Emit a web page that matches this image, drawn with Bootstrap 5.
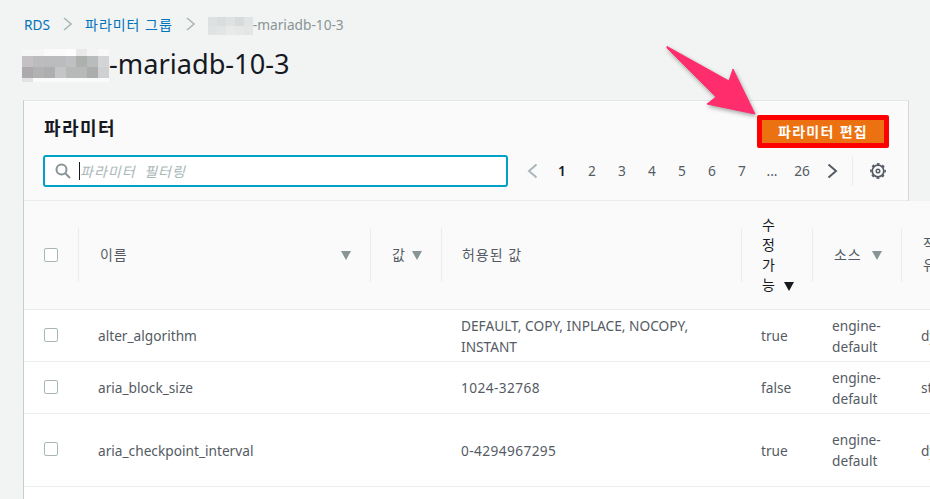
<!doctype html>
<html lang="ko">
<head>
<meta charset="utf-8">
<title>파라미터</title>
<link href="https://cdn.jsdelivr.net/npm/bootstrap@5.3.0/dist/css/bootstrap.min.css" rel="stylesheet">
<style>
html,body{height:499px;overflow:hidden}
body{background:#f2f3f3;color:#16191f;font-family:"Noto Sans","Noto Sans CJK KR",sans-serif;font-size:13.7px;line-height:21px;width:930px}
.ko{font-size:14px;letter-spacing:.07em}
.page-wrap{padding:14px 0 0 24px;position:relative}
.crumbs{height:20px;color:#879596}
.crumbs a{color:#0073bb;text-decoration:none}
.crumb-sep{width:9px;height:14px;margin:0 13px}
.crumb-mosaic{margin:3px 0 -1px}
.title-line{margin:15px 0 0 -2px;height:33px;font-size:27.2px;color:#16191f}
.title-text{line-height:29px}
.panel{margin:18px 0 0 -1px;width:886px;background:#fff;border-left:1px solid #c6cbcb;border-right:1px solid #d5dbdb;border-top:1px solid #e3e7e7}
.panel-head{background:#fafafa;padding:13px 19px 14px 19px;height:100px;border-bottom:1px solid #eaeded}
.panel-title{font-size:18px;letter-spacing:.08em;font-weight:700;line-height:28px;padding:0 0 6px 1px}
.edit-btn{background:#ec7211;border:5px solid #ff0000;border-radius:2px;color:#fff;font-weight:700;font-size:14px;letter-spacing:1.3px;line-height:23px;width:132px;height:33px;padding:0;text-align:center;white-space:nowrap}
.second-row{margin-top:7px}
.search-box{width:465px;height:32px;background:#fff;border:2px solid #00a1c9;border-radius:3px;padding-left:10px}
.search-caret{width:1px;height:18px;background:#16191f;margin:0 0 0 8px}
.search-input{border:0;outline:0;padding:0;flex:1;background:transparent;font-style:italic;font-size:14px;font-family:inherit;letter-spacing:1px;word-spacing:4px}
.search-input::placeholder{color:#aab7b8;opacity:1}
.pager{margin-left:9px;color:#545b64}
.pg{width:30px;text-align:center}
.pg-num{padding-bottom:2px}
.pg-now{color:#16191f;font-weight:600}
.pg-divider{width:1px;height:30px;background:#eaeded;margin:0 17px 0 5px}
.param-table{table-layout:fixed;width:977px;margin:0;color:#545b64;--bs-table-bg:transparent;border-collapse:separate;border-spacing:0}
.param-table>thead>tr>th{background:#fafafa;font-weight:400;height:109px;padding:0;border-bottom:1px solid #eaeded;vertical-align:middle;color:#545b64}
.param-table>tbody>tr>td{background:#fff;padding:0 20px;border-bottom:1px solid #eaeded;vertical-align:middle;color:#545b64;line-height:21px}
.param-table td.check-cell{padding:0 0 2px 20px}
.param-table td.clip-cell{padding-right:0;white-space:nowrap;overflow:hidden}
.digits{letter-spacing:.4px}
.r52{height:52px}
.r73{height:73px}
.r12{height:12px}
.hcell{height:54px;border-left:1px solid #eaeded;padding:0 19px 0 21px}
.hcell-first{border-left:0;padding:0 0 0 20px}
.hcell-tight{padding-left:20px}
.hlabel{margin-bottom:2px}
.stack{line-height:20px;color:#16191f;white-space:nowrap;flex:none;margin-left:-1px}
.stack svg{margin-left:8px}
.tri{width:10px;height:9px;flex:none}
.tick{width:14px;height:14px;border:1px solid #aab7b8;border-radius:2px;margin:0;display:block;background:#fff;appearance:none}
.blocky{display:block;flex:none}
.mark-arrow{position:absolute;left:660px;top:40px;filter:drop-shadow(1px 2px 2px rgba(0,0,0,.35))}
</style>
</head>
<body>
<div class="page-wrap">
  <nav class="crumbs d-flex align-items-center">
    <a href="#">RDS</a>
    <svg class="crumb-sep" viewBox="0 0 9 14"><path d="M1 1l7 6-7 6" fill="none" stroke="#aab7b8" stroke-width="1.6"/></svg>
    <a href="#" class="ko">파라미터 그룹</a>
    <svg class="crumb-sep" viewBox="0 0 9 14"><path d="M1 1l7 6-7 6" fill="none" stroke="#aab7b8" stroke-width="1.6"/></svg>
    <span class="d-inline-flex align-items-center">
      <svg class="blocky crumb-mosaic" width="45" height="18" viewBox="0 0 5 2" shape-rendering="crispEdges">
        <rect width="1" height="1" fill="#dee1e1"/><rect x="1" width="1" height="1" fill="#d9dddc"/><rect x="2" width="1" height="1" fill="#dfe2e2"/><rect x="3" width="1" height="1" fill="#d8dbdb"/><rect x="4" width="1" height="1" fill="#e1e4e4"/>
        <rect y="1" width="1" height="1" fill="#e0e3e3"/><rect x="1" y="1" width="1" height="1" fill="#e3e5e5"/><rect x="2" y="1" width="1" height="1" fill="#e8eaea"/><rect x="3" y="1" width="1" height="1" fill="#e6e8e8"/><rect x="4" y="1" width="1" height="1" fill="#e4e6e6"/>
      </svg>-mariadb-10-3</span>
  </nav>
  <h1 class="title-line fw-normal d-flex align-items-start">
    <svg class="blocky" width="87" height="33" viewBox="0 0 8 33" preserveAspectRatio="none" shape-rendering="crispEdges">
      <g><rect width="1" height="7" fill="#f7f6f6"/><rect x="1" width="1" height="7" fill="#f6f6f6"/><rect x="2" width="1" height="7" fill="#fafafa"/><rect x="3" width="1" height="7" fill="#fbfbfb"/><rect x="4" width="1" height="7" fill="#fdfdfd"/><rect x="5" width="1" height="7" fill="#e9e9e9"/><rect x="6" width="1" height="7" fill="#f4f4f4"/><rect x="7" width="1" height="7" fill="#f8f8f8"/></g>
      <g><rect y="7" width="1" height="11" fill="#c4c0c3"/><rect x="1" y="7" width="1" height="11" fill="#bcbcbe"/><rect x="2" y="7" width="1" height="11" fill="#bbbbbe"/><rect x="3" y="7" width="1" height="11" fill="#bbbcbd"/><rect x="4" y="7" width="1" height="11" fill="#bfc0c2"/><rect x="5" y="7" width="1" height="11" fill="#aeb0ae"/><rect x="6" y="7" width="1" height="11" fill="#b9bcbc"/><rect x="7" y="7" width="1" height="11" fill="#d3d4d6"/></g>
      <g><rect y="18" width="1" height="11" fill="#acaaad"/><rect x="1" y="18" width="1" height="11" fill="#b2b2b3"/><rect x="2" y="18" width="1" height="11" fill="#aeaeb1"/><rect x="3" y="18" width="1" height="11" fill="#c4c5c6"/><rect x="4" y="18" width="1" height="11" fill="#b7b8b8"/><rect x="5" y="18" width="1" height="11" fill="#b7b9b8"/><rect x="6" y="18" width="1" height="11" fill="#abacac"/><rect x="7" y="18" width="1" height="11" fill="#cfd0d2"/></g>
      <g><rect y="29" width="1" height="4" fill="#e3e3e4"/><rect x="1" y="29" width="7" height="4" fill="#fafafa"/></g>
    </svg><span class="title-text">-mariadb-10-3</span></h1>

  <section class="panel">
    <div class="panel-head">
      <div class="d-flex justify-content-between align-items-center">
        <div class="panel-title">파라미터</div>
        <button type="button" class="btn edit-btn">파라미터 편집</button>
      </div>
      <div class="d-flex align-items-center second-row">
        <label class="search-box d-flex align-items-center mb-0">
          <svg width="16" height="16" viewBox="0 0 16 16" class="blocky"><circle cx="6.5" cy="6.5" r="5" fill="none" stroke="#879596" stroke-width="2"/><path d="M10.500 10.500l4.500 4.500" stroke="#879596" stroke-width="2"/></svg>
          <span class="search-caret"></span>
          <input class="search-input" type="text" placeholder="파라미터 필터링">
        </label>
        <div class="d-flex align-items-center pager">
          <span class="pg d-flex justify-content-center"><svg width="11" height="16" viewBox="0 0 11 16"><path d="M9.500 1.500L2 8l7.500 6.500" fill="none" stroke="#aab7b8" stroke-width="2"/></svg></span>
          <span class="pg pg-num pg-now">1</span><span class="pg pg-num">2</span><span class="pg pg-num">3</span><span class="pg pg-num">4</span><span class="pg pg-num">5</span><span class="pg pg-num">6</span><span class="pg pg-num">7</span><span class="pg pg-num">...</span><span class="pg pg-num">26</span>
          <span class="pg d-flex justify-content-center"><svg width="11" height="16" viewBox="0 0 11 16"><path d="M1.500 1.500L9 8l-7.500 6.500" fill="none" stroke="#545b64" stroke-width="2"/></svg></span>
          <span class="pg-divider"></span>
          <svg width="16" height="16" viewBox="0 0 16 16" class="blocky"><g fill="none" stroke="#545b64"><circle cx="8" cy="8" r="5.800" stroke-width="1.700"/><circle cx="8" cy="8" r="7.100" stroke-width="1.600" stroke-dasharray="2.790 2.790" stroke-dashoffset="1.390"/><circle cx="8" cy="8" r="1.800" stroke-width="1.400"/></g></svg>
        </div>
      </div>
    </div>

    <table class="table param-table">
      <colgroup><col style="width:54px"><col style="width:292px"><col style="width:71px"><col style="width:300px"><col style="width:71px"><col style="width:89px"><col></colgroup>
      <thead>
        <tr>
          <th><div class="hcell hcell-first d-flex align-items-center"><input class="tick" type="checkbox" aria-label="전체 선택"></div></th>
          <th><div class="hcell d-flex align-items-center justify-content-between"><span class="ko hlabel">이름</span><svg class="tri" viewBox="0 0 10 9"><path d="M0 0h10L5 9z" fill="#879596"/></svg></div></th>
          <th><div class="hcell d-flex align-items-center justify-content-between"><span class="ko hlabel">값</span><svg class="tri" viewBox="0 0 10 9"><path d="M0 0h10L5 9z" fill="#879596"/></svg></div></th>
          <th><div class="hcell hcell-tight d-flex align-items-center"><span class="ko hlabel">허용된 값</span></div></th>
          <th><div class="hcell d-flex align-items-center"><span class="stack ko">수<br>정<br>가<br>능<svg class="tri" viewBox="0 0 10 9"><path d="M0 0h10L5 9z" fill="#16191f"/></svg></span></div></th>
          <th><div class="hcell d-flex align-items-center justify-content-between"><span class="ko hlabel">소스</span><svg class="tri" viewBox="0 0 10 9"><path d="M0 0h10L5 9z" fill="#879596"/></svg></div></th>
          <th><div class="hcell d-flex align-items-center"><span class="ko hlabel">적용<br>유형</span></div></th>
        </tr>
      </thead>
      <tbody>
        <tr class="r52"><td class="check-cell"><input class="tick" type="checkbox" aria-label="선택"></td><td>alter_algorithm</td><td></td><td>DEFAULT, COPY, INPLACE, NOCOPY, INSTANT</td><td>true</td><td>engine-default</td><td class="clip-cell">dynamic</td></tr>
        <tr class="r52"><td class="check-cell"><input class="tick" type="checkbox" aria-label="선택"></td><td>aria_block_size</td><td></td><td class="digits">1024-32768</td><td>false</td><td>engine-default</td><td class="clip-cell">static</td></tr>
        <tr class="r73"><td class="check-cell"><input class="tick" type="checkbox" aria-label="선택"></td><td>aria_checkpoint_interval</td><td></td><td class="digits">0-4294967295</td><td>true</td><td>engine-default</td><td class="clip-cell">dynamic</td></tr>
        <tr class="r12"><td colspan="7" class="border-0"></td></tr>
      </tbody>
    </table>
  </section>

  <svg class="mark-arrow" width="110" height="90" viewBox="660 40 110 90"><path d="M667 46.500L729 81l4-12 22 45-48-10 9-7-49-49z" fill="#ff2d6b" stroke="#ff2d6b" stroke-width="1" stroke-linejoin="round"/></svg>
</div>
</body>
</html>
